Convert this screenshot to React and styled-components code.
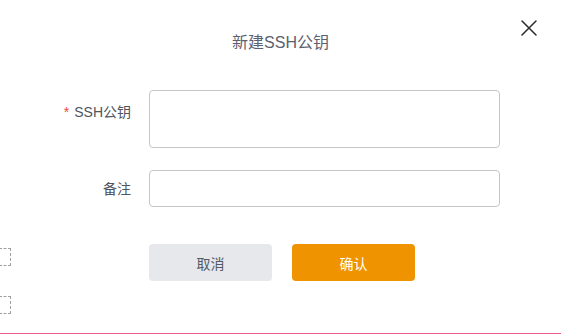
import React from 'react';
import styled, { createGlobalStyle } from 'styled-components';

const GlobalStyle = createGlobalStyle`
  html, body {
    margin: 0;
    padding: 0;
    background: #ffffff;
  }
  * {
    box-sizing: border-box;
  }
`;

const FONT = `"Liberation Sans", "Noto Sans CJK SC", sans-serif`;

const App = () => {
  return (
    <>
      <GlobalStyle />
      <Page>
        <Dialog>
          <Header>
            <Title>新建SSH公钥</Title>
            <CloseButton aria-label="关闭">
              <svg width="16" height="16" viewBox="0 0 16 16">
                <path
                  d="M1 1L15 15M15 1L1 15"
                  stroke="#2b2b2b"
                  strokeWidth="1.5"
                  strokeLinecap="round"
                />
              </svg>
            </CloseButton>
          </Header>

          <Form>
            <Row>
              <Label $tall>
                <Required>*</Required>SSH公钥
              </Label>
              <TextArea />
            </Row>
            <Row>
              <Label>备注</Label>
              <Input />
            </Row>
            <Row $actions>
              <span />
              <Buttons>
                <Button>取消</Button>
                <Button $primary>确认</Button>
              </Buttons>
            </Row>
          </Form>
        </Dialog>
        <GhostBox $top={248} />
        <GhostBox $top={296} />
        <BottomLine />
      </Page>
    </>
  );
};

const Page = styled.div`
  position: relative;
  width: 561px;
  height: 334px;
  overflow: hidden;
  background: #ffffff;
  font-family: ${FONT};
`;

const GhostBox = styled.div`
  position: absolute;
  left: -10px;
  top: ${({ $top }) => $top}px;
  width: 21px;
  height: 18px;
  border: 1px dashed #a0a0a0;
`;

const BottomLine = styled.div`
  position: absolute;
  left: 0;
  right: 0;
  bottom: 0;
  height: 1px;
  background: #ea5f8c;
`;

const Dialog = styled.div`
  position: relative;
  width: 100%;
  height: 100%;
`;

const Header = styled.div`
  padding-top: 30px;
  display: flex;
  justify-content: center;
`;

const Title = styled.h2`
  margin: 0;
  font-size: 16px;
  line-height: 26px;
  font-weight: 400;
  color: #5b6170;
`;

const CloseButton = styled.button`
  position: absolute;
  top: 20px;
  right: 24px;
  width: 16px;
  height: 16px;
  padding: 0;
  border: none;
  background: none;
  display: flex;
  cursor: pointer;
`;

const Form = styled.div`
  margin-top: 34px;
  display: flex;
  flex-direction: column;
  gap: 22px;
`;

const Row = styled.div`
  display: grid;
  grid-template-columns: 131px 351px;
  column-gap: 18px;
  align-items: center;
  margin-top: ${({ $actions }) => ($actions ? '15px' : '0')};
`;

const Label = styled.label`
  align-self: ${({ $tall }) => ($tall ? 'start' : 'center')};
  text-align: right;
  font-size: 14px;
  line-height: ${({ $tall }) => ($tall ? '44px' : '36px')};
  color: #4f5560;
`;

const Required = styled.span`
  color: #f0463c;
  margin-right: 5px;
`;

const TextArea = styled.textarea`
  display: block;
  width: 351px;
  height: 58px;
  resize: none;
  border: 1px solid #c4c6ca;
  border-radius: 4px;
  outline: none;
  padding: 6px 10px;
  font-family: ${FONT};
`;

const Input = styled.input`
  display: block;
  width: 351px;
  height: 37px;
  border: 1px solid #c4c6ca;
  border-radius: 4px;
  outline: none;
  padding: 0 10px;
  font-family: ${FONT};
`;

const Buttons = styled.div`
  display: flex;
  gap: 20px;
`;

const Button = styled.button`
  width: 123px;
  height: 37px;
  border: none;
  border-radius: 4px;
  font-family: ${FONT};
  font-size: 14px;
  background: ${({ $primary }) => ($primary ? '#f09300' : '#e6e8ec')};
  color: ${({ $primary }) => ($primary ? '#ffffff' : '#545a64')};
  cursor: pointer;
`;

export default App;
